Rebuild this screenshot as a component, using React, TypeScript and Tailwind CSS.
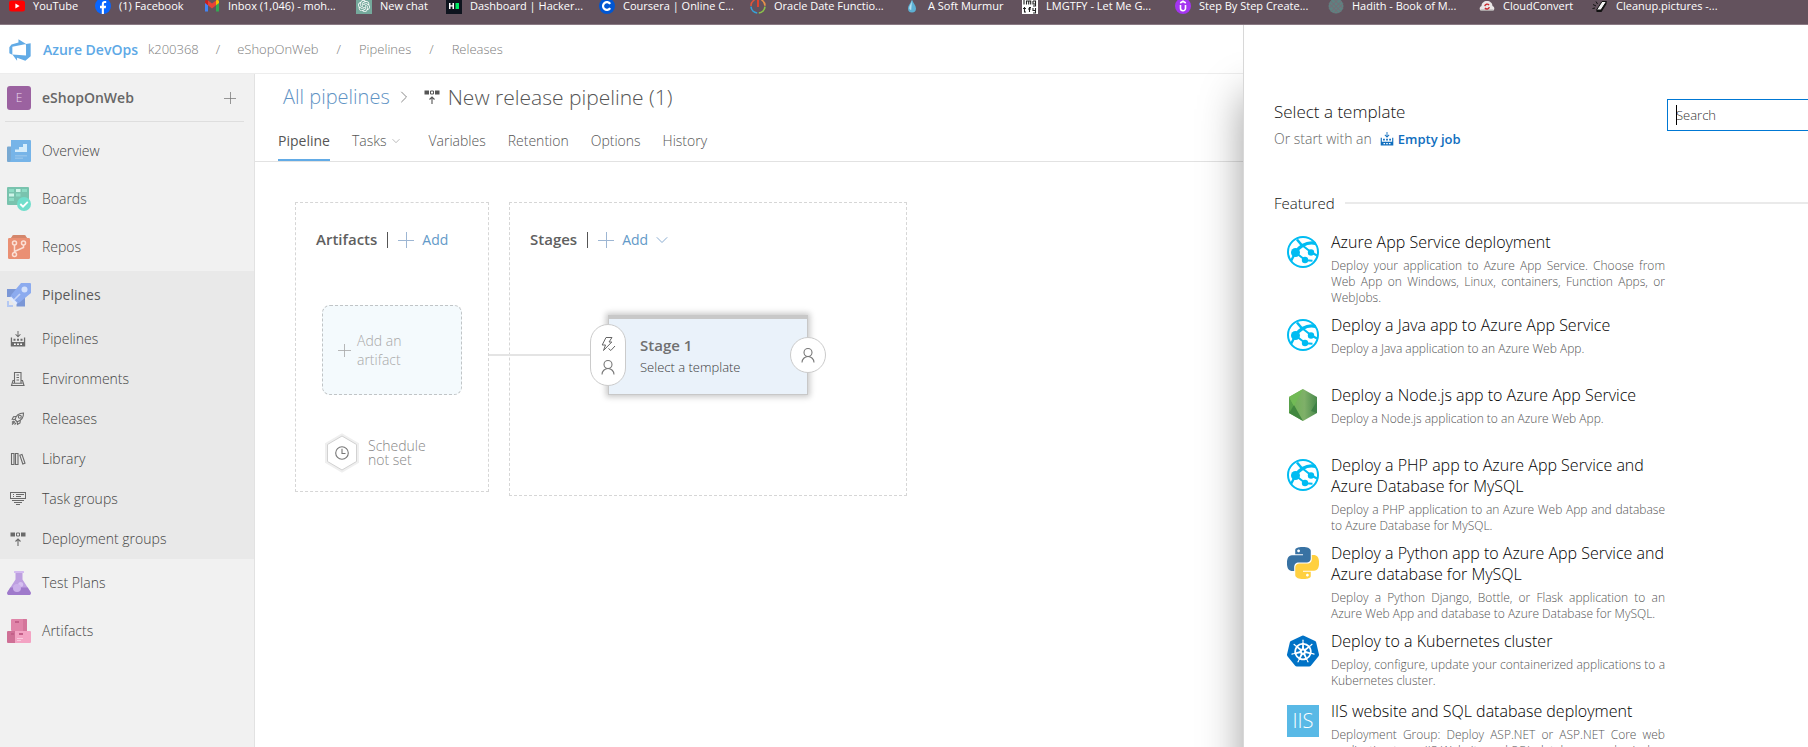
import type { ReactNode } from 'react'
import { SiKubernetes, SiOpenai } from 'react-icons/si'

/* ---------- bookmark favicons ---------- */

const fav = 'size-4 shrink-0'

const bookmarks: { label: string; icon: ReactNode; width: string }[] = [
  {
    label: 'YouTube',
    width: 'w-[70px]',
    icon: (
      <svg className={fav} viewBox="0 0 16 16">
        <rect x="0" y="2.5" width="16" height="11" rx="2.5" fill="#f00" />
        <path d="M6.4 5.6 10.6 8l-4.2 2.4z" fill="#fff" />
      </svg>
    ),
  },
  {
    label: '(1) Facebook',
    width: 'w-[93px]',
    icon: (
      <svg className={fav} viewBox="0 0 16 16">
        <circle cx="8" cy="8" r="8" fill="#0866ff" />
        <path d="M6.8 16V10.2H5V7.8h1.8V6.3c0-2.4 1.2-3.4 3.1-3.4.6 0 1 .05 1.3.1v2h-1.1c-.9 0-1.2.5-1.2 1.3v1.5h2.2l-.4 2.4H8.9V16z" fill="#fff" />
      </svg>
    ),
  },
  {
    label: 'Inbox (1,046) - moh...',
    width: 'w-[136px]',
    icon: (
      <svg className={fav} viewBox="0 0 16 16">
        <path d="M1 3.5v10h3V7z" fill="#4285f4" />
        <path d="M15 3.5v10h-3V7z" fill="#34a853" />
        <path d="M1 3.5C1 2 2.800 1.600 4 2.500v4.800L1 5z" fill="#c5221f" />
        <path d="M15 3.500C15 2 13.200 1.600 12 2.500v4.800L15 5z" fill="#fbbc04" />
        <path d="M4 2.500 8 5.600l4-3.100v4.800L8 10.400 4 7.300z" fill="#ea4335" />
      </svg>
    ),
  },
  {
    label: 'New chat',
    width: 'w-[74px]',
    icon: (
      <span className="flex size-4 shrink-0 items-center justify-center bg-[#75a99c]">
        <SiOpenai className="size-3 text-white" />
      </span>
    ),
  },
  {
    label: 'Dashboard | Hacker...',
    width: 'w-[137px]',
    icon: (
      <svg className={fav} viewBox="0 0 16 16">
        <rect width="16" height="16" fill="#0e141e" />
        <path d="M3 5h1.500v2.200h2V5H8v6H6.500V8.600h-2V11H3z" fill="#fff" />
        <rect x="9.500" y="5" width="3.500" height="6" fill="#00ea64" />
      </svg>
    ),
  },
  {
    label: 'Coursera | Online C...',
    width: 'w-[135px]',
    icon: (
      <svg className={fav} viewBox="0 0 16 16">
        <circle cx="8" cy="8" r="8" fill="#0056d2" />
        <path d="M11.200 5.900A3.900 3.900 0 1 0 11.200 10.100" fill="none" stroke="#fff" strokeWidth="2.200" />
      </svg>
    ),
  },
  {
    label: 'Oracle Date Functio...',
    width: 'w-[138px]',
    icon: (
      <svg className={fav} viewBox="0 0 16 16" fill="none" strokeWidth="1.600">
        <path d="M4.500 1.900A7 7 0 0 0 1 8" stroke="#e0563a" />
        <path d="M1 8.600A7 7 0 0 0 7.200 15" stroke="#36a3d9" />
        <path d="M8.800 15A7 7 0 0 0 15 8.600" stroke="#8bc34a" />
        <path d="M15 7.800A7 7 0 0 0 11.500 1.900" stroke="#e8924a" />
        <path d="M8 1v8" stroke="#e0442e" strokeWidth="2" />
      </svg>
    ),
  },
  {
    label: 'A Soft Murmur',
    width: 'w-[102px]',
    icon: (
      <svg className={fav} viewBox="0 0 16 16">
        <path d="M8 1C7.500 4.500 4 7 4 10.600a4 4 0 0 0 8 0C12 7 8.500 4.500 8 1z" fill="#5db0d3" />
        <path d="M8 2.500C7.500 5.500 5.300 7.500 5.200 10.200a2 2.500 0 0 0 2 1.800z" fill="#b5e2f2" />
      </svg>
    ),
  },
  {
    label: 'LMGTFY - Let Me G...',
    width: 'w-[137px]',
    icon: (
      <svg className={fav} viewBox="0 0 16 16">
        <rect width="16" height="16" fill="#fff" />
        <path d="M2 1.500v5M4.500 6.500V3h2.200v3.500M6.700 3h2v3.500M11 3h2.500v5H11M11 3v3h2.500M2.500 9v5H4M1 10.500h3M7.500 14V9.500H9M6 11h3M11 10v2.500h2.500V10v5H11" fill="none" stroke="#222" strokeWidth="1.100" />
      </svg>
    ),
  },
  {
    label: 'Step By Step Create...',
    width: 'w-[137px]',
    icon: (
      <svg className={fav} viewBox="0 0 16 16">
        <circle cx="8" cy="8" r="8" fill="#a435f0" />
        <path d="M5.500 7v3.200a2.500 2.500 0 0 0 5 0V7M5.200 5 8 3.300 10.800 5" fill="none" stroke="#fff" strokeWidth="1.600" />
      </svg>
    ),
  },
  {
    label: 'Hadith - Book of M...',
    width: 'w-[135px]',
    icon: (
      <svg className={fav} viewBox="0 0 16 16">
        <circle cx="8" cy="8" r="7.500" fill="#5d8281" />
        <path d="M2.500 3 13 13.500M5.500 1 15 10.500M1 5.500 10.500 15M13.500 3 3 13.500M10.500 1 1 10.500M15 5.500 5.500 15" stroke="#7a6a75" strokeWidth="1" />
      </svg>
    ),
  },
  {
    label: 'CloudConvert',
    width: 'w-[97px]',
    icon: (
      <svg className={fav} viewBox="0 0 16 16">
        <path d="M1.500 12.500C0 11 .5 8.500 2.500 8 2.500 5 5 3 8 3s5.500 2 5.500 5c2 .5 2.500 3 1 4.500z" fill="#e9e6e6" />
        <path d="M1.500 11.500h13l-.5 1.500H2z" fill="#a9a3a5" />
        <path d="M5.800 8.200A2.300 2.300 0 0 1 10 7.200M10.200 9A2.300 2.300 0 0 1 6 10" fill="none" stroke="#c8282d" strokeWidth="1.400" />
      </svg>
    ),
  },
  {
    label: 'Cleanup.pictures -...',
    width: 'w-[128px]',
    icon: (
      <svg className={fav} viewBox="0 0 16 16">
        <path d="M10 3.500h4.500L9 12H4.500z" fill="#f4f4f4" stroke="#111" strokeWidth="1" />
        <path d="M4.500 12H9l5.500-8.500v2.500L9.500 14H4.500z" fill="#111" />
        <path d="M1 6.500 4 8M4 3.500 5.500 6M0.500 10.500 3 10" stroke="#111" strokeWidth="1" />
      </svg>
    ),
  },
]

/* ---------- sidebar icons ---------- */

const OverviewIcon = () => (
  <svg className="size-6" viewBox="0 0 24 24">
    <path d="M0 8.500a1 1 0 0 1 1-1h3V23H1a1 1 0 0 1-1-1z" fill="#79a9d2" />
    <path d="M4 1h19a1 1 0 0 1 1 1v20a1 1 0 0 1-1 1H2.500L4 21z" fill="#76b4e8" />
    <path d="M8 13v-2.500h4V8h4V5h4v8z" fill="#d6edfb" />
    <path d="M8 16h12v1.500H8zM8 18.500h8V20H8z" fill="#92c2ea" />
  </svg>
)
const BoardsIcon = () => (
  <svg className="size-6" viewBox="0 0 24 24">
    <rect width="22" height="18" rx="1" fill="#79c3ae" />
    <path d="M2 2h5v3H2zM15 2h5v3h-5zM9 6.500h4.500v3H9zM2 11h5v3H2z" fill="#8edcc5" />
    <path d="M9 2h4.500v3H9zM2 6.500h5v3H2z" fill="#cff5e9" />
    <circle cx="17" cy="17" r="7" fill="#70decb" />
    <path d="m13.300 17 2.700 2.700 4.800-4.900" fill="none" stroke="#fff" strokeWidth="1.800" />
  </svg>
)
const ReposIcon = () => (
  <svg className="size-6" viewBox="0 0 24 24">
    <path d="M5 1.500A1.500 1.500 0 0 1 6.500 0h11A1.500 1.500 0 0 1 19 1.500L21 4H3z" fill="#d4866b" />
    <rect x="1" y="3" width="22" height="21" rx="1.200" fill="#ea9074" />
    <g fill="none" stroke="#fbe0d6" strokeWidth="1.500">
      <circle cx="7.500" cy="8" r="2" />
      <circle cx="16.500" cy="8" r="2" />
      <circle cx="7.500" cy="19.500" r="2" />
      <path d="M7.500 10v7.500M16.500 10v2.500l-9 4" />
    </g>
  </svg>
)
const PipelinesIcon = () => (
  <svg className="size-6" viewBox="0 0 24 24">
    <path d="M0 6h9l9 9v8.500H9.500V18L5 14H0z" fill="#7b97d6" />
    <path d="M14 0h9a1 1 0 0 1 1 1v9L12.500 19.500 4.500 11.500z" fill="#8cabef" />
    <path d="m4.500 11.500 8 8-4 1.500-5.500-5.500z" fill="#8cabef" />
    <path d="M2 15.500 4 13.500l6.500 6.500-2 2z" fill="#e4ecfc" />
    <circle cx="17.500" cy="6.500" r="3" fill="#d4e1fb" />
    <path d="m7 17 6-6" stroke="#c7d6f8" strokeWidth="1.600" />
    <path d="M0 18h2v4h4v2H0z" fill="#b4c8f2" />
  </svg>
)
const TestPlansIcon = () => (
  <svg className="size-6" viewBox="0 0 24 24">
    <path d="M8.500 1h7v7.500l8 12.500c.8 1.500 0 3-1.700 3H2.200C.5 24-.3 22.500.5 21l8-12.500z" fill="#bd9fe0" />
    <path d="M3.300 16.500h17.400l2.800 4.500c.8 1.500 0 3-1.700 3H2.200C.5 24-.3 22.500.5 21z" fill="#9f7acb" />
    <rect x="7" width="10" height="2" rx=".6" fill="#d3baf0" />
    <circle cx="13.700" cy="13.500" r="2.500" fill="#d6c0f0" />
    <circle cx="10" cy="17" r="4" fill="#cbb0ea" />
  </svg>
)
const ArtifactsIcon = () => (
  <svg className="size-6" viewBox="0 0 24 24">
    <rect x="4" width="16" height="12" rx="1" fill="#e085a9" />
    <path d="M16 0h3a1 1 0 0 1 1 1v11h-4z" fill="#d4769b" />
    <path d="M1 12h7v12H1a1 1 0 0 1-1-1V13a1 1 0 0 1 1-1z" fill="#cf7096" />
    <path d="M8 12h15a1 1 0 0 1 1 1v10a1 1 0 0 1-1 1H8z" fill="#f3a3c3" />
    <path d="M8 2h4v2H8zM4 14h3v2H4zM12 14h4v2h-4z" fill="#c4608a" />
    <path d="M10 19.500h6M10 21.500h4" stroke="#f9cade" strokeWidth="1" />
  </svg>
)

const BuildIcon = ({ className = 'size-4' }: { className?: string }) => (
  <svg className={className} viewBox="0 0 16 16" fill="currentColor">
    <path d="M7.500 0h1v4.500l1.600-1.600.7.700L8 6.500 5.200 3.600l.7-.7 1.600 1.600z" />
    <path d="M.8 6.500h1.300V11h11.800V6.500h1.300V15.500H.8z" />
    <path d="M3.500 7.800h2v2h-2zM7 7.800h2v2H7zM10.500 7.800h2v2h-2z" />
    <path d="M4 12.500h1.800v1.600H4zM7.100 12.500h1.800v1.600H7.100zM10.200 12.500H12v1.600h-1.800z" fill="#fff" />
  </svg>
)
const EnvironmentsIcon = () => (
  <svg className="size-4" viewBox="0 0 16 16" fill="none" stroke="currentColor" strokeWidth="1.100">
    <path d="M4.500 12V1.500h6.500V12M4.500 9.500H3L1.500 14.500h12.500L12.500 9.500H11M3 12.200h9.500M6.500 4h2.500M6.500 6.500h2.500M6.500 9h2.500" />
  </svg>
)
const ReleasesIcon = () => (
  <svg className="size-4" viewBox="0 0 16 16" fill="none" stroke="currentColor" strokeWidth="1.100">
    <path d="M5 8.500C6 4.500 9 2 13.500 2 13.700 6.500 11 9.500 7.200 10.800z" />
    <circle cx="9.800" cy="5.800" r="1.500" />
    <path d="M6 5.500 3.500 5.800 2.200 8.300 5 8.500M10.300 9.500 10 12l-2.500 1.300-.3-2.500M5 10.500 2 13.500M3.800 9.800 2 11.500M6 12l-1.500 1.500" />
  </svg>
)
const LibraryIcon = () => (
  <svg className="size-4" viewBox="0 0 16 16" fill="none" stroke="currentColor" strokeWidth="1.100">
    <path d="M1.500 2.500h2.500v11H1.500zM5.500 2.500H8v11H5.500zM9.800 4.200l2.200-.8 3 8.800-2.200.8z" />
  </svg>
)
const TaskGroupsIcon = () => (
  <svg className="size-4" viewBox="0 0 16 16" fill="none" stroke="currentColor" strokeWidth="1">
    <path d="M.5 1.500h15v6H.5zM2 9.500h12M4 11.500h8M6 13.500h4M5.500 3.500h8M5.500 5.500h5M2.500 3.500h1.500M2.500 5.500h1.500" shapeRendering="crispEdges" />
  </svg>
)
const DeployIcon = ({ className = 'size-4' }: { className?: string }) => (
  <svg className={className} viewBox="0 0 16 16" fill="currentColor">
    <path d="M.5 1.500h4.500v4H.5zM11 1.500h4.500v4H11z" />
    <path d="M6.500 2h3v3h-3z" fill="none" stroke="currentColor" />
    <path d="M8 15V8M5.500 10.500 8 8l2.500 2.500" fill="none" stroke="currentColor" strokeWidth="1.100" />
  </svg>
)

/* ---------- small line icons ---------- */

const Plus = ({ className }: { className: string }) => (
  <svg className={className} viewBox="0 0 16 16" fill="none" stroke="currentColor" shapeRendering="crispEdges">
    <path d="M8.500 0v16M0 8.500h16" />
  </svg>
)
const Chevron = ({ className }: { className: string }) => (
  <svg className={className} viewBox="0 0 12 12" fill="none" stroke="currentColor">
    <path d="M.8 3.300 6 8.500l5.200-5.200" />
  </svg>
)
const Person = () => (
  <svg className="size-4 text-[#777]" viewBox="0 0 16 16" fill="none" stroke="currentColor" strokeWidth="1.100">
    <circle cx="8" cy="5.500" r="4" />
    <path d="M2 15.500a6 6 0 0 1 12 0" />
  </svg>
)
const Trigger = () => (
  <svg className="size-4 text-[#666]" viewBox="0 0 16 16" fill="none" stroke="currentColor" strokeWidth="1">
    <path d="M6 1.500h6L9 6h2.800L3.500 14.500 5.500 9H2.200zM8.500 12.500l2.300 2 4.200-4.500" />
  </svg>
)

/* ---------- template icons ---------- */

const WebAppIcon = () => (
  <svg className="size-8" viewBox="0 0 32 32" fill="none" stroke="#00bcf2">
    <circle cx="16" cy="16" r="15" strokeWidth="2" />
    <path d="M10 3.500 15 9.500" strokeWidth="2.600" />
    <path d="M28.500 7.500C24 6.200 19.500 7.300 15.500 9.500 12 11.500 10 14 8.500 16.500" strokeWidth="3.200" />
    <path d="M15.500 9.500 24.500 16.500M8.500 16.500l10 7.800M24.500 16.500 30 19.500M18.500 24.300l7 .5" strokeWidth="2" />
    <path d="M8.500 16.500 4 25" strokeWidth="2.400" />
    <circle cx="8.500" cy="16.500" r="4.500" fill="#00bcf2" stroke="none" />
    <circle cx="24" cy="16.500" r="3.200" fill="#00bcf2" stroke="none" />
    <circle cx="18" cy="24" r="3.200" fill="#00bcf2" stroke="none" />
  </svg>
)
const NodeIcon = () => (
  <svg className="size-8" viewBox="0 0 32 32">
    <defs>
      <linearGradient id="node" x1="0" x2="1" y1="0" y2="0">
        <stop offset="0" stopColor="#6bb252" />
        <stop offset=".55" stopColor="#7fb069" />
        <stop offset="1" stopColor="#4a8a4c" />
      </linearGradient>
    </defs>
    <path d="M16 0 30 8v16l-14 8L2 24V8z" fill="url(#node)" />
    <path d="M2 8v16l5-7z" fill="#58a04a" />
    <path d="M2 24 7 16l9 16z" fill="#41873f" />
    <path d="M30 12v12l-6-2z" fill="#3f8146" />
    <path d="M2 8 16 0l-9 17z" fill="#72ba56" />
  </svg>
)
const PythonIcon = () => (
  <svg className="size-8" viewBox="0 0 24 24">
    <path fill="#3872a3" d="M14.25.18l.9.2.73.26.59.3.45.32.34.34.25.34.16.33.1.3.04.26.02.2-.01.13V8.5l-.05.63-.13.55-.21.46-.26.38-.3.31-.33.25-.35.19-.35.14-.33.1-.3.07-.26.04-.21.02H8.77l-.69.05-.59.14-.5.22-.41.27-.33.32-.27.35-.2.36-.15.37-.1.35-.07.32-.04.27-.02.21v3.06H3.17l-.21-.03-.28-.07-.32-.12-.35-.18-.36-.26-.36-.36-.35-.46-.32-.59-.28-.73-.21-.88-.14-1.05-.05-1.23.06-1.22.16-1.04.24-.87.32-.71.36-.57.4-.44.42-.33.42-.24.4-.16.36-.1.32-.05.24-.01h.16l.06.01h8.16v-.83H6.18l-.01-2.75-.02-.37.05-.34.11-.31.17-.28.25-.26.31-.23.38-.2.44-.18.51-.15.58-.12.64-.1.71-.06.77-.04.84-.02 1.27.05zm-6.3 1.98l-.23.33-.08.41.08.41.23.34.33.22.41.09.41-.09.33-.22.23-.34.08-.41-.08-.41-.23-.33-.33-.22-.41-.09-.41.09z" />
    <path fill="#ffd040" d="M21.04 6.11l.28.06.32.12.35.18.36.27.36.35.35.47.32.59.28.73.21.88.14 1.04.05 1.23-.06 1.23-.16 1.04-.24.86-.32.71-.36.57-.4.45-.42.33-.42.24-.4.16-.36.09-.32.05-.24.02-.16-.01h-8.22v.82h5.84l.01 2.76.02.36-.05.34-.11.31-.17.29-.25.25-.31.24-.38.2-.44.17-.51.15-.58.13-.64.09-.71.07-.77.04-.84.01-1.27-.04-1.07-.14-.9-.2-.73-.25-.59-.3-.45-.33-.34-.34-.25-.34-.16-.33-.1-.3-.04-.25-.02-.2.01-.13v-5.34l.05-.64.13-.54.21-.46.26-.38.3-.32.33-.24.35-.2.35-.14.33-.1.3-.06.26-.04.21-.02.13-.01h5.84l.69-.05.59-.14.5-.21.41-.28.33-.32.27-.35.2-.36.15-.36.1-.35.07-.32.04-.28.02-.21V6.07h2.09l.14.01zm-6.47 14.25l-.23.33-.08.41.08.41.23.33.33.23.41.08.41-.08.33-.23.23-.33.08-.41-.08-.41-.23-.33-.33-.23-.41-.08-.41.08z" />
  </svg>
)
const IisIcon = () => (
  <span className="flex size-8 items-center justify-center bg-[#59b9e6] text-[20px] leading-8 font-light text-white">
    IIS
  </span>
)

const templates: { icon: ReactNode; title: string; text: string }[] = [
  {
    icon: <WebAppIcon />,
    title: 'Azure App Service deployment',
    text: 'Deploy your application to Azure App Service. Choose from Web App on Windows, Linux, containers, Function Apps, or WebJobs.',
  },
  {
    icon: <WebAppIcon />,
    title: 'Deploy a Java app to Azure App Service',
    text: 'Deploy a Java application to an Azure Web App.',
  },
  {
    icon: <NodeIcon />,
    title: 'Deploy a Node.js app to Azure App Service',
    text: 'Deploy a Node.js application to an Azure Web App.',
  },
  {
    icon: <WebAppIcon />,
    title: 'Deploy a PHP app to Azure App Service and Azure Database for MySQL',
    text: 'Deploy a PHP application to an Azure Web App and database to Azure Database for MySQL.',
  },
  {
    icon: <PythonIcon />,
    title: 'Deploy a Python app to Azure App Service and Azure database for MySQL',
    text: 'Deploy a Python Django, Bottle, or Flask application to an Azure Web App and database to Azure Database for MySQL.',
  },
  {
    icon: <SiKubernetes className="size-8 text-[#0072c6]" />,
    title: 'Deploy to a Kubernetes cluster',
    text: 'Deploy, configure, update your containerized applications to a Kubernetes cluster.',
  },
  {
    icon: <IisIcon />,
    title: 'IIS website and SQL database deployment',
    text: 'Deployment Group: Deploy ASP.NET or ASP.NET Core web application to an IIS Website and SQL database on physical or virtual machines.',
  },
]

const tabs = ['Pipeline', 'Tasks', 'Variables', 'Retention', 'Options', 'History']

const subItems: { label: string; icon: ReactNode }[] = [
  { label: 'Pipelines', icon: <BuildIcon /> },
  { label: 'Environments', icon: <EnvironmentsIcon /> },
  { label: 'Releases', icon: <ReleasesIcon /> },
  { label: 'Library', icon: <LibraryIcon /> },
  { label: 'Task groups', icon: <TaskGroupsIcon /> },
  { label: 'Deployment groups', icon: <DeployIcon /> },
]

function NavItem({ icon, label, current }: { icon: ReactNode; label: string; current?: boolean }) {
  return (
    <a href="#" className={`flex h-12 items-center gap-[11px] px-[7px] ${current ? 'font-medium text-[#5a5a5a]' : 'text-[#444]'}`}>
      {icon}
      {label}
    </a>
  )
}

function Sidebar() {
  return (
    <aside className="w-[255px] shrink-0 border-r border-[#e2e2e2] bg-[#f1f1f1]">
      <div className="mr-2.5 ml-[5px] flex h-12 items-center border-b border-[#dedede] pl-0.5">
        <span className="flex size-6 items-center justify-center rounded-[3px] bg-[#9b62a0] text-xs text-[#ead9ec]">E</span>
        <span className="ml-[11px] font-semibold text-[#666]">eShopOnWeb</span>
        <button aria-label="Add" className="mr-2 ml-auto text-[#777]">
          <Plus className="size-3" />
        </button>
      </div>
      <nav className="pt-[5px]">
        <NavItem icon={<OverviewIcon />} label="Overview" />
        <NavItem icon={<BoardsIcon />} label="Boards" />
        <NavItem icon={<ReposIcon />} label="Repos" />
        <div className="bg-[#e9e9e9]">
          <NavItem icon={<PipelinesIcon />} label="Pipelines" current />
          {subItems.map((s) => (
            <a key={s.label} href="#" className="flex h-10 items-center gap-4 px-2.5 text-[#444]">
              <span className="text-[#6a6a6a]">{s.icon}</span>
              {s.label}
            </a>
          ))}
        </div>
        <NavItem icon={<TestPlansIcon />} label="Test Plans" />
        <NavItem icon={<ArtifactsIcon />} label="Artifacts" />
      </nav>
    </aside>
  )
}

function SectionHeading({ title, menu }: { title: string; menu?: boolean }) {
  return (
    <div className="flex h-5 items-center">
      <h2 className="text-[15px] font-semibold text-[#5f5f5f]">{title}</h2>
      <span className="mx-2.5 h-4 w-px bg-[#555]" />
      <button className="flex items-center gap-2 font-medium text-[#6399c8]">
        <Plus className="size-4 text-[#9db6d3]" />
        Add
        {menu && <Chevron className="size-3 text-[#88abd0]" />}
      </button>
    </div>
  )
}

function Canvas() {
  return (
    <div className="flex items-start gap-5 px-10 pt-10">
      <section className="h-[290px] w-[194px] border border-dashed border-[#d6d6d6] px-5 pt-[27px]">
        <SectionHeading title="Artifacts" />
        <button className="mx-1.5 mt-[55px] flex h-[90px] w-[140px] items-center gap-1.5 rounded-lg border border-dashed border-[#c0c4c6] bg-[#f4fafd] pl-[15px] text-left leading-[19px] text-[#a8a8a8]">
          <Plus className="size-[13px] shrink-0" />
          <span className="w-14">Add an artifact</span>
        </button>
        <button className="mt-[38px] ml-2 flex items-center gap-2 text-left leading-[14px] text-[#888]">
          <svg className="h-10 w-9 shrink-0" viewBox="0 0 36 40">
            <path d="M18 2 33.500 11v18L18 38 2.500 29V11z" fill="#fff" stroke="#efefef" strokeWidth="3" />
            <path d="M18 3 32.500 11.500v17L18 37 3.500 28.500v-17z" fill="#fff" stroke="#d2d2d2" />
            <circle cx="18" cy="20" r="6.300" fill="none" stroke="#777" strokeWidth="1.100" />
            <path d="M18 15.800V20.500h3.500" fill="none" stroke="#777" strokeWidth="1.100" />
          </svg>
          <span className="w-16">Schedule not set</span>
        </button>
      </section>

      <section className="relative h-[294px] w-[398px] border border-dashed border-[#d6d6d6] px-5 pt-[27px]">
        <SectionHeading title="Stages" menu />
        <span className="absolute top-[151px] -left-[21px] h-0.5 w-[103px] bg-[#e4e4e4]" />
        <div className="relative mt-[65px] ml-[78px] h-20 w-[200px] border border-t-4 border-[#c8c8c8] bg-[#eaf2fa] pt-4 pl-[31px] shadow-[0_0_6px_2px_rgba(0,0,0,0.22)]">
          <div className="text-[15px] leading-5 font-semibold text-[#707070]">Stage 1</div>
          <a href="#" className="block text-[13px] leading-6 text-[#3c3c3c]">Select a template</a>
          <button aria-label="Pre-deployment conditions" className="absolute top-[5px] -left-[19px] flex h-[62px] w-9 flex-col items-center justify-center gap-[7px] rounded-full border border-[#cbcbcb] bg-white">
            <Trigger />
            <Person />
          </button>
          <button aria-label="Post-deployment conditions" className="absolute top-[18px] -right-[19px] flex size-9 items-center justify-center rounded-full border border-[#cbcbcb] bg-white">
            <Person />
          </button>
        </div>
      </section>
    </div>
  )
}

function TemplatePanel() {
  return (
    <aside className="absolute inset-y-0 right-0 w-[565px] border-l border-[#d8d8d8] bg-white shadow-[0_70px_40px_rgba(0,0,0,0.38)]">
      <div className="h-full overflow-hidden pt-[74px] pl-[30px]">
        <div className="flex items-start">
          <div className="grow pt-px">
            <h2 className="text-[17px] leading-6 text-[#111]">Select a template</h2>
            <p className="mt-[3px] flex items-center leading-6 text-[#666]">
              Or start with an
              <a href="#" className="ml-2 flex items-center gap-1 text-[13px] font-semibold text-[#106ebe]">
                <BuildIcon className="size-[14px]" />
                Empty job
              </a>
            </p>
          </div>
          <label className="relative w-[141px] shrink-0 overflow-hidden">
            <span className="sr-only">Search templates</span>
            <span className="absolute top-1.5 left-[9px] h-5 w-px bg-black" />
            <input
              type="text"
              placeholder="Search"
              className="h-8 w-[200px] border border-[#0078d4] px-2 text-[13px] outline-none placeholder:text-[#333]"
            />
          </label>
        </div>
        <div className="mt-10 flex items-center gap-2.5">
          <h3 className="text-[15px] leading-6 text-[#111]">Featured</h3>
          <span className="h-0.5 grow bg-[#eaeaea]" />
        </div>
        <ul className="mt-[17px] pl-[13px]">
          {templates.map((t) => (
            <li key={t.title} className="flex min-h-[70px] gap-3">
              <div className="shrink-0 pt-1">{t.icon}</div>
              <div className="w-[334px] pb-[9px]">
                <h4 className="text-base leading-[21px] text-black">{t.title}</h4>
                <p className="mt-[5px] text-justify text-xs leading-4 text-[#555]">{t.text}</p>
              </div>
            </li>
          ))}
        </ul>
      </div>
    </aside>
  )
}

export default function App() {
  return (
    <div className="flex h-screen flex-col overflow-hidden bg-white font-['Open_Sans','Noto_Sans',sans-serif] text-sm font-light">
      <nav className="relative z-10 h-[25px] shrink-0 overflow-hidden border-b border-[#8a7a84] bg-[#63525d]">
        <ul className="-mt-0.5 flex gap-4 pl-[9px] text-[11px] leading-3 font-normal whitespace-nowrap text-white">
          {bookmarks.map((b) => (
            <li key={b.label} className={b.width}>
              <a href="#" className="flex h-4 items-center gap-2">
                {b.icon}
                {b.label}
              </a>
            </li>
          ))}
        </ul>
      </nav>

      <div className="relative flex min-h-0 grow flex-col">
        <header className="flex h-[49px] shrink-0 items-center border-b border-[#ededed] pt-px pl-2 text-[13px] text-[#7c7c7c]">
          <svg className="size-6" viewBox="0 0 18 18">
            <path d="M17 4v9.740l-4 3.280-6.200-2.260V17l-3.510-4.590 10.230.8V4.440zm-3.410.490L7.850 1v2.290L2.580 4.840 1 6.870v4.610l2.260 1V6.570z" fill="#62abe6" />
          </svg>
          <a href="#" className="ml-[11px] text-sm font-semibold text-[#5ea9e6]">Azure DevOps</a>
          <a href="#" className="ml-2.5">k200368</a>
          <span className="mx-[17px]">/</span>
          <a href="#">eShopOnWeb</a>
          <span className="mx-[18px]">/</span>
          <a href="#">Pipelines</a>
          <span className="mx-[18px]">/</span>
          <a href="#">Releases</a>
        </header>

        <div className="flex min-h-0 grow">
          <Sidebar />
          <main className="min-w-0 grow">
            <div className="flex h-[46px] items-center pl-7 text-[#555]">
              <a href="#" className="text-xl text-[#5f93c4]">All pipelines</a>
              <Chevron className="mx-2 size-3 -rotate-90 text-[#888]" />
              <DeployIcon className="mr-2 ml-1.5 size-4 text-[#555]" />
              <h1 className="text-[21px]">New release pipeline (1)</h1>
            </div>
            <div className="flex h-[42px] items-end gap-[22px] border-b border-[#e2e2e2] pl-[23px] text-[#555]">
              {tabs.map((t, i) => (
                <button
                  key={t}
                  className={`flex h-[38px] items-center gap-1.5 border-b-2 ${i === 0 ? 'border-[#62abe6] font-medium' : 'border-transparent'}`}
                >
                  {t}
                  {t === 'Tasks' && <Chevron className="mr-1.5 size-2 text-[#999]" />}
                </button>
              ))}
            </div>
            <Canvas />
          </main>
        </div>

        <TemplatePanel />
      </div>
    </div>
  )
}
